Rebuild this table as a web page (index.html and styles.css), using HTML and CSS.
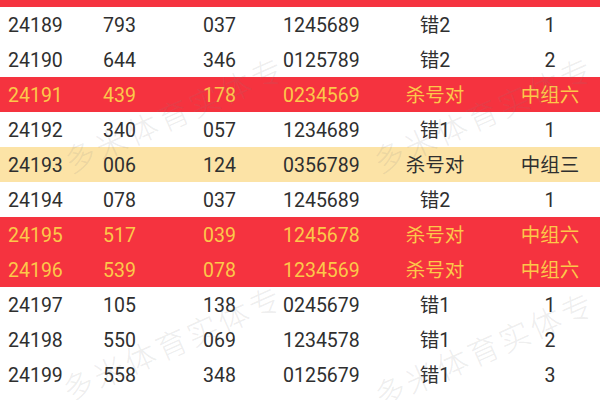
FILE: index.html
```html
<!DOCTYPE html>
<html lang="zh">
<head>
<meta charset="utf-8">
<link rel="stylesheet" href="styles.css">
</head>
<body>
<div class="page">
  <div class="top-strip"></div>
  <div class="table">
    <div class="row"><span>24189</span><span>793</span><span>037</span><span>1245689</span><span class="c">错2</span><span class="c">1</span></div>
    <div class="row"><span>24190</span><span>644</span><span>346</span><span>0125789</span><span class="c">错2</span><span class="c">2</span></div>
    <div class="row hot"><span>24191</span><span>439</span><span>178</span><span>0234569</span><span class="c">杀号对</span><span class="c">中组六</span></div>
    <div class="row"><span>24192</span><span>340</span><span>057</span><span>1234689</span><span class="c">错1</span><span class="c">1</span></div>
    <div class="row warm"><span>24193</span><span>006</span><span>124</span><span>0356789</span><span class="c">杀号对</span><span class="c">中组三</span></div>
    <div class="row"><span>24194</span><span>078</span><span>037</span><span>1245689</span><span class="c">错2</span><span class="c">1</span></div>
    <div class="row hot"><span>24195</span><span>517</span><span>039</span><span>1245678</span><span class="c">杀号对</span><span class="c">中组六</span></div>
    <div class="row hot"><span>24196</span><span>539</span><span>078</span><span>1234569</span><span class="c">杀号对</span><span class="c">中组六</span></div>
    <div class="row"><span>24197</span><span>105</span><span>138</span><span>0245679</span><span class="c">错1</span><span class="c">1</span></div>
    <div class="row"><span>24198</span><span>550</span><span>069</span><span>1234578</span><span class="c">错1</span><span class="c">2</span></div>
    <div class="row"><span>24199</span><span>558</span><span>348</span><span>0125679</span><span class="c">错1</span><span class="c">3</span></div>
    <div class="row"><span></span><span></span><span></span><span></span><span></span><span></span></div>
  </div>
  <div class="wm wm1">多米体育实体专</div>
  <div class="wm wm2">多米体育实体专</div>
  <div class="wm wm3">多米体育实体专</div>
  <div class="wm wm4">多米体育实体专</div>
</div>
</body>
</html>
```
FILE: styles.css
```css
html, body {
  margin: 0;
  padding: 0;
  background: #ffffff;
}
.page {
  position: relative;
  width: 600px;
  height: 400px;
  overflow: hidden;
  font-family: Roboto, "Noto Sans CJK SC", sans-serif;
  color: #2f2f2f;
}
.top-strip {
  height: 7px;
  background: #f5333f;
}
.table {
  display: flex;
  flex-direction: column;
}
.row {
  display: grid;
  grid-template-columns: 95px 100px 80px 87px 130px 100px;
  padding-left: 8px;
  padding-top: 3px;
  box-sizing: border-box;
  height: 35px;
  align-items: center;
  font-size: 19.5px;
  line-height: 1;
}
.row span {
  white-space: nowrap;
}
.row .c {
  text-align: center;
}
.row.hot {
  background: #f5333f;
  color: #fcc84a;
}
.row.warm {
  background: #fce3a6;
}
.wm {
  position: absolute;
  font-family: "Noto Sans CJK SC", sans-serif;
  font-weight: 300;
  font-size: 31px;
  letter-spacing: 3px;
  color: rgba(130, 130, 130, 0.15);
  transform: translate(-50%, -50%) rotate(-24deg);
  white-space: nowrap;
  pointer-events: none;
}
.wm1 { left: 174px; top: 113px; }
.wm2 { left: 483px; top: 113px; }
.wm3 { left: 172px; top: 342px; }
.wm4 { left: 484px; top: 348px; }
```
